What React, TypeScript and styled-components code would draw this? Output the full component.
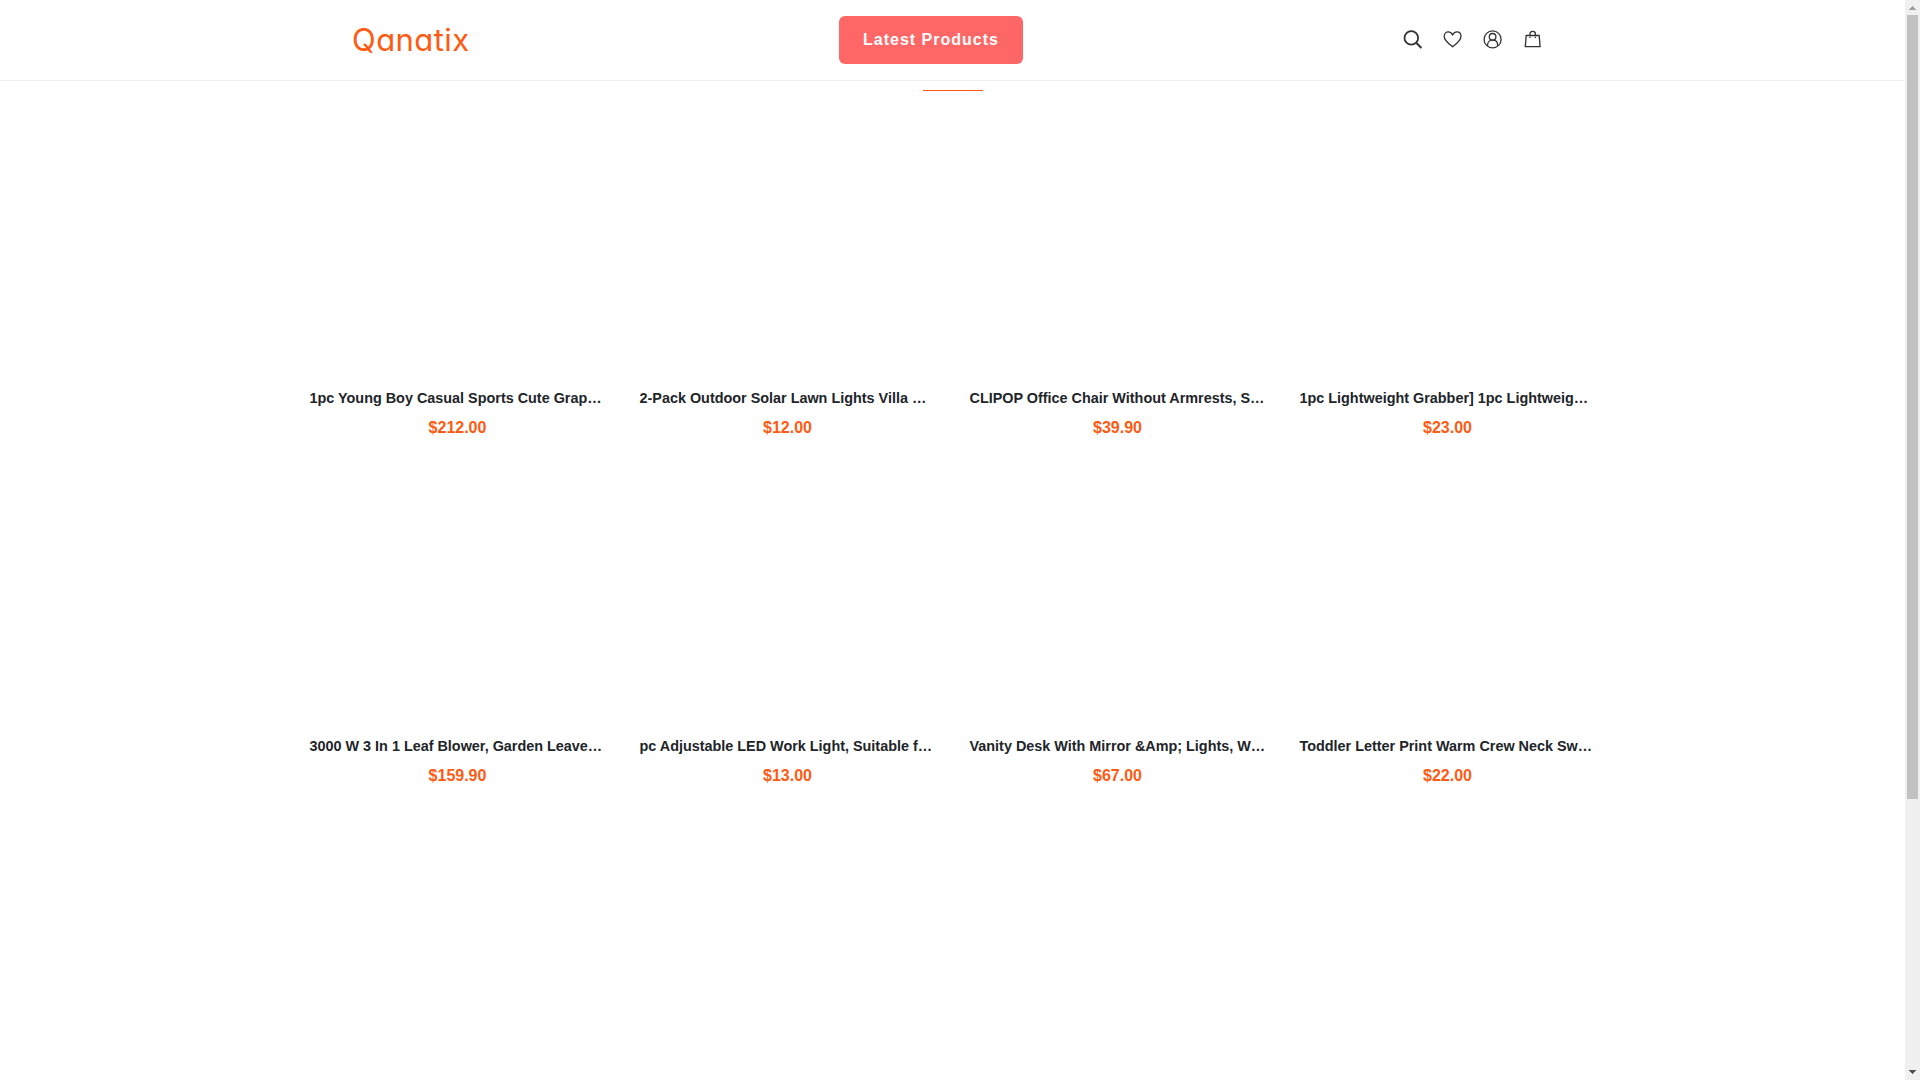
import React from "react";
import styled, { createGlobalStyle } from "styled-components";

const GlobalStyle = createGlobalStyle`
  * { box-sizing: border-box; }
  body {
    margin: 0;
    overflow: hidden;
    background: #fff;
    color: #212529;
    font-family: "Liberation Sans", Arial, sans-serif;
  }
`;

const Screen = styled.div`
  display: flex;
  width: 1920px;
  height: 1080px;
  overflow: hidden;
`;

const Page = styled.div`
  flex: 1;
  display: flex;
  flex-direction: column;
  min-width: 0;
`;

const Header = styled.header`
  height: 81px;
  flex: none;
  border-bottom: 1px solid #eee;
`;

const HeaderInner = styled.div`
  display: grid;
  grid-template-columns: 487px 184px 1fr;
  align-items: center;
  height: 80px;
  padding: 0 362px 0 352px;
`;

const Logo = styled.a`
  color: #ff5a12;
  font-family: Inter, sans-serif;
  font-size: 31px;
  font-weight: 400;
  line-height: 40px;
  letter-spacing: 0.45px;
  font-feature-settings: "cv11";
`;

const LatestButton = styled.button`
  height: 48px;
  padding: 0 0 1px;
  border: 0;
  border-radius: 6px;
  background: #ff6666;
  color: #fff;
  font: bold 16px/24px "Liberation Sans", Arial, sans-serif;
  letter-spacing: 1px;
  white-space: nowrap;
`;

const Tools = styled.nav`
  display: flex;
  justify-content: flex-end;
  gap: 20px;

  svg {
    display: block;
    width: 20px;
    height: 20px;
    fill: none;
    stroke: #333;
  }
`;

const Underline = styled.div`
  flex: none;
  width: 60px;
  height: 1px;
  margin: 9px 0 0 923px;
  background: #ff5a12;
`;

const Grid = styled.main`
  display: grid;
  grid-template-columns: repeat(4, 330px);
  grid-auto-rows: 348px;
  width: 1320px;
  margin: 0 auto;
`;

const Card = styled.article`
  display: flex;
  flex-direction: column;
  padding: 0 17px;
`;

const Photo = styled.div`
  flex: none;
  height: 296px;
`;

const Title = styled.h3`
  margin: 0;
  font-size: 14.4px;
  line-height: 22px;
  font-weight: bold;
  white-space: nowrap;
`;

const Price = styled.div`
  margin-top: 7px;
  color: #ff5a12;
  font-size: 16px;
  line-height: 24px;
  font-weight: bold;
  text-align: center;
`;

const Scrollbar = styled.div`
  display: flex;
  flex-direction: column;
  align-items: center;
  width: 15px;
  background: #f0f0f0;

  svg {
    display: block;
    flex: none;
  }
`;

const Thumb = styled.div`
  width: 11px;
  height: 784px;
  margin-bottom: auto;
  background: #c1c1c1;
`;

const products = [
  ["1pc Young Boy Casual Sports Cute Grap…", "$212.00"],
  ["2-Pack Outdoor Solar Lawn Lights Villa …", "$12.00"],
  ["CLIPOP Office Chair Without Armrests, S…", "$39.90"],
  ["1pc Lightweight Grabber] 1pc Lightweig…", "$23.00"],
  ["3000 W 3 In 1 Leaf Blower, Garden Leave…", "$159.90"],
  ["pc Adjustable LED Work Light, Suitable f…", "$13.00"],
  ["Vanity Desk With Mirror &Amp; Lights, W…", "$67.00"],
  ["Toddler Letter Print Warm Crew Neck Sw…", "$22.00"],
];

const SearchIcon = () => (
  <svg viewBox="0 0 20 20" strokeWidth="1.8">
    <circle cx="8.3" cy="7.9" r="6.8" />
    <path d="M13.2 12.8l5.2 5.2" strokeWidth="2" />
  </svg>
);

const HeartIcon = () => (
  <svg viewBox="0 0 20 20" strokeWidth="1.3" strokeLinejoin="round">
    <path d="M9.6 16.8C6.1 13.9 1.2 10.4 1.2 6.4C1.2 3.7 3 1.9 5.3 1.9C7.2 1.9 8.8 3 9.6 5C10.4 3 12 1.9 13.9 1.9C16.2 1.9 18 3.7 18 6.4C18 10.4 13.1 13.9 9.6 16.8Z" />
  </svg>
);

const UserIcon = () => (
  <svg viewBox="0 0 20 20" strokeWidth="1.3">
    <circle cx="9.6" cy="9.4" r="8.5" />
    <circle cx="9.6" cy="6.8" r="3.3" />
    <path d="M4.6 16V14.9C4.6 12.1 6.7 10.2 9.6 10.2S14.6 12.1 14.6 14.9V16" />
  </svg>
);

const BagIcon = () => (
  <svg viewBox="0 0 20 20" strokeWidth="1.3">
    <path d="M3.2 5.5H16.2L17.1 16.6H2.3Z" />
    <path d="M7 5.5V4C7 2.3 8.1 1.4 9.7 1.4S12.4 2.3 12.4 4V5.5M7 6.8V8M12.4 6.8V8" />
  </svg>
);

export default function App() {
  return (
    <>
      <GlobalStyle />
      <Screen>
        <Page>
          <Header>
            <HeaderInner>
              <Logo>Qanatix</Logo>
              <LatestButton>Latest Products</LatestButton>
              <Tools>
                <SearchIcon />
                <HeartIcon />
                <UserIcon />
                <BagIcon />
              </Tools>
            </HeaderInner>
          </Header>
          <Underline />
          <Grid>
            {products.map(([title, price]) => (
              <Card key={title}>
                <Photo />
                <Title>{title}</Title>
                <Price>{price}</Price>
              </Card>
            ))}
          </Grid>
        </Page>
        <Scrollbar>
          <svg width="15" height="15" viewBox="0 0 15 15" shapeRendering="crispEdges" fill="#a0a0a0">
            <path d="M7 6h1v1h1v1h1v1h1v1H4V9h1V8h1V7h1z" />
          </svg>
          <Thumb />
          <svg width="15" height="15" viewBox="0 0 15 15" shapeRendering="crispEdges" fill="#505050">
            <path d="M4 5h7v1h-1v1H9v1H8v1H7V8H6V7H5V6H4z" />
          </svg>
        </Scrollbar>
      </Screen>
    </>
  );
}
